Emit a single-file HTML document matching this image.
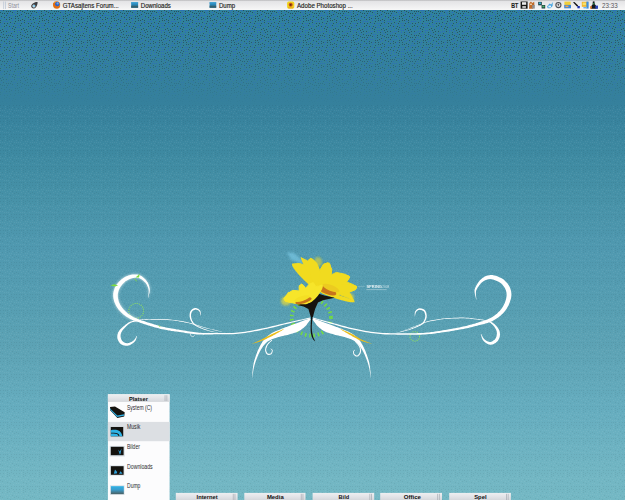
<!DOCTYPE html>
<html><head><meta charset="utf-8">
<style>
html,body{margin:0;padding:0;}
body{width:625px;height:500px;overflow:hidden;position:relative;font-family:"Liberation Sans",sans-serif;
background:linear-gradient(to bottom,#2f839e 0%,#30829e 4%,#33819d 12%,#35809c 20%,#3d89a1 30%,#4792a8 40%,#5099b0 50%,#569eb2 61%,#5da3b5 70%,#66adbf 82%,#72b6c3 95%,#74b8c4 100%);}
#art{position:absolute;left:0;top:0;}
</style></head><body>
<svg id="art" width="625" height="500" viewBox="0 0 625 500" font-family="Liberation Sans, sans-serif">
<defs>
<linearGradient id="tb" x1="0" y1="0" x2="0" y2="1"><stop offset="0" stop-color="#c4c4c6"/><stop offset="0.1" stop-color="#c9c9cb"/><stop offset="0.14" stop-color="#e4e4e6"/><stop offset="0.6" stop-color="#eeeeef"/><stop offset="1" stop-color="#f7f7f7"/></linearGradient>
<linearGradient id="hd" x1="0" y1="0" x2="0" y2="1"><stop offset="0" stop-color="#eeeff1"/><stop offset="0.5" stop-color="#e3e4e8"/><stop offset="1" stop-color="#d6d8dc"/></linearGradient>
<linearGradient id="dump" x1="0" y1="0" x2="0" y2="1"><stop offset="0" stop-color="#2fb2e6"/><stop offset="0.45" stop-color="#3a9ccc"/><stop offset="1" stop-color="#4a5f62"/></linearGradient>
<pattern id="dots" width="24" height="24" patternUnits="userSpaceOnUse"><rect x="2" y="5" width="1" height="1" fill="#28505f"/><rect x="20" y="1" width="1" height="1" fill="#28505f"/><rect x="6" y="19" width="1" height="1" fill="#28505f"/><rect x="21" y="14" width="1" height="1" fill="#28505f"/><rect x="7" y="23" width="1" height="1" fill="#28505f"/><rect x="15" y="3" width="1" height="1" fill="#28505f"/><rect x="2" y="13" width="1" height="1" fill="#28505f"/><rect x="9" y="2" width="1" height="1" fill="#28505f"/><rect x="9" y="17" width="1" height="1" fill="#28505f"/><rect x="6" y="15" width="1" height="1" fill="#28505f"/><rect x="0" y="22" width="1" height="1" fill="#28505f"/><rect x="9" y="19" width="1" height="1" fill="#28505f"/><rect x="15" y="16" width="1" height="1" fill="#28505f"/><rect x="17" y="11" width="1" height="1" fill="#28505f"/><rect x="20" y="8" width="1" height="1" fill="#28505f"/><rect x="6" y="7" width="1" height="1" fill="#28505f"/><rect x="4" y="2" width="1" height="1" fill="#28505f"/><rect x="21" y="5" width="1" height="1" fill="#28505f"/><rect x="6" y="1" width="1" height="1" fill="#28505f"/><rect x="4" y="17" width="1" height="1" fill="#28505f"/><rect x="19" y="15" width="1" height="1" fill="#28505f"/><rect x="18" y="18" width="1" height="1" fill="#28505f"/><rect x="14" y="5" width="1" height="1" fill="#28505f"/><rect x="14" y="23" width="1" height="1" fill="#28505f"/><rect x="21" y="23" width="1" height="1" fill="#28505f"/><rect x="20" y="20" width="1" height="1" fill="#28505f"/><rect x="15" y="18" width="1" height="1" fill="#28505f"/><rect x="1" y="16" width="1" height="1" fill="#28505f"/><rect x="0" y="20" width="1" height="1" fill="#28505f"/><rect x="17" y="16" width="1" height="1" fill="#28505f"/><rect x="12" y="12" width="1" height="1" fill="#28505f"/><rect x="7" y="13" width="1" height="1" fill="#28505f"/><rect x="11" y="18" width="1" height="1" fill="#28505f"/><rect x="4" y="23" width="1" height="1" fill="#28505f"/><rect x="6" y="11" width="1" height="1" fill="#28505f"/><rect x="0" y="12" width="1" height="1" fill="#28505f"/><rect x="10" y="22" width="1" height="1" fill="#28505f"/><rect x="22" y="11" width="1" height="1" fill="#28505f"/><rect x="18" y="20" width="1" height="1" fill="#28505f"/><rect x="20" y="10" width="1" height="1" fill="#28505f"/><rect x="8" y="11" width="1" height="1" fill="#28505f"/><rect x="14" y="7" width="1" height="1" fill="#28505f"/><rect x="13" y="2" width="1" height="1" fill="#28505f"/><rect x="10" y="11" width="1" height="1" fill="#28505f"/><rect x="17" y="13" width="1" height="1" fill="#28505f"/><rect x="0" y="6" width="1" height="1" fill="#28505f"/><rect x="22" y="19" width="1" height="1" fill="#28505f"/><rect x="15" y="21" width="1" height="1" fill="#28505f"/><rect x="1" y="8" width="1" height="1" fill="#28505f"/><rect x="3" y="10" width="1" height="1" fill="#28505f"/><rect x="12" y="4" width="1" height="1" fill="#28505f"/><rect x="23" y="4" width="1" height="1" fill="#28505f"/><rect x="11" y="9" width="1" height="1" fill="#28505f"/><rect x="3" y="7" width="1" height="1" fill="#28505f"/><rect x="4" y="13" width="1" height="1" fill="#28505f"/><rect x="23" y="14" width="1" height="1" fill="#2d64c8"/><rect x="19" y="23" width="1" height="1" fill="#2d64c8"/><rect x="7" y="21" width="1" height="1" fill="#2d64c8"/><rect x="10" y="4" width="1" height="1" fill="#2d64c8"/><rect x="12" y="15" width="1" height="1" fill="#2d64c8"/><rect x="1" y="10" width="1" height="1" fill="#2d64c8"/><rect x="22" y="2" width="1" height="1" fill="#2d64c8"/><rect x="12" y="20" width="1" height="1" fill="#2d64c8"/><rect x="5" y="4" width="1" height="1" fill="#2d64c8"/><rect x="9" y="0" width="1" height="1" fill="#2d64c8"/><rect x="8" y="8" width="1" height="1" fill="#2d64c8"/><rect x="20" y="17" width="1" height="1" fill="#2d64c8"/><rect x="6" y="9" width="1" height="1" fill="#2d64c8"/><rect x="4" y="15" width="1" height="1" fill="#2d64c8"/><rect x="8" y="15" width="1" height="1" fill="#2d64c8"/><rect x="1" y="2" width="1" height="1" fill="#2d64c8"/><rect x="13" y="18" width="1" height="1" fill="#2d64c8"/><rect x="14" y="12" width="1" height="1" fill="#2d64c8"/><rect x="11" y="2" width="1" height="1" fill="#2d64c8"/><rect x="23" y="9" width="1" height="1" fill="#2d64c8"/><rect x="15" y="1" width="1" height="1" fill="#2d64c8"/><rect x="2" y="23" width="1" height="1" fill="#2d64c8"/><rect x="7" y="5" width="1" height="1" fill="#2d64c8"/><rect x="5" y="21" width="1" height="1" fill="#2d64c8"/><rect x="4" y="19" width="1" height="1" fill="#2d64c8"/><rect x="18" y="1" width="1" height="1" fill="#2d64c8"/><rect x="7" y="17" width="1" height="1" fill="#2d64c8"/><rect x="15" y="14" width="1" height="1" fill="#2d64c8"/><rect x="17" y="3" width="1" height="1" fill="#2d64c8"/><rect x="12" y="7" width="1" height="1" fill="#2d64c8"/><rect x="9" y="13" width="1" height="1" fill="#2d64c8"/><rect x="17" y="6" width="1" height="1" fill="#2d64c8"/><rect x="19" y="3" width="1" height="1" fill="#2d64c8"/><rect x="22" y="21" width="1" height="1" fill="#2d64c8"/><rect x="0" y="0" width="1" height="1" fill="#2d64c8"/><rect x="22" y="7" width="1" height="1" fill="#2d64c8"/><rect x="17" y="23" width="1" height="1" fill="#2d64c8"/><rect x="22" y="16" width="1" height="1" fill="#2d64c8"/><rect x="10" y="15" width="1" height="1" fill="#2d64c8"/><rect x="15" y="10" width="1" height="1" fill="#2d64c8"/><rect x="17" y="8" width="1" height="1" fill="#2d64c8"/><rect x="19" y="6" width="1" height="1" fill="#2d64c8"/><rect x="3" y="21" width="1" height="1" fill="#2d64c8"/><rect x="20" y="12" width="1" height="1" fill="#2d64c8"/><rect x="7" y="3" width="1" height="1" fill="#2d64c8"/><rect x="12" y="23" width="1" height="1" fill="#2d64c8"/><rect x="1" y="18" width="1" height="1" fill="#2d64c8"/><rect x="10" y="7" width="1" height="1" fill="#2d64c8"/><rect x="13" y="10" width="1" height="1" fill="#2d64c8"/></pattern>
<pattern id="tex" width="16" height="16" patternUnits="userSpaceOnUse"><rect x="12" y="11" width="1" height="1" fill="#fff" opacity="0.06"/><rect x="5" y="0" width="1" height="1" fill="#fff" opacity="0.06"/><rect x="9" y="13" width="1" height="1" fill="#fff" opacity="0.06"/><rect x="9" y="6" width="1" height="1" fill="#fff" opacity="0.06"/><rect x="0" y="12" width="1" height="1" fill="#fff" opacity="0.06"/><rect x="4" y="4" width="1" height="1" fill="#fff" opacity="0.06"/><rect x="6" y="4" width="1" height="1" fill="#fff" opacity="0.06"/><rect x="2" y="3" width="1" height="1" fill="#fff" opacity="0.06"/><rect x="13" y="4" width="1" height="1" fill="#fff" opacity="0.06"/><rect x="5" y="8" width="1" height="1" fill="#fff" opacity="0.06"/><rect x="5" y="10" width="1" height="1" fill="#fff" opacity="0.06"/><rect x="7" y="15" width="1" height="1" fill="#fff" opacity="0.06"/><rect x="5" y="12" width="1" height="1" fill="#fff" opacity="0.06"/><rect x="0" y="14" width="1" height="1" fill="#fff" opacity="0.06"/><rect x="12" y="1" width="1" height="1" fill="#fff" opacity="0.06"/><rect x="8" y="4" width="1" height="1" fill="#fff" opacity="0.06"/><rect x="0" y="3" width="1" height="1" fill="#fff" opacity="0.06"/><rect x="10" y="15" width="1" height="1" fill="#fff" opacity="0.06"/><rect x="2" y="14" width="1" height="1" fill="#fff" opacity="0.06"/><rect x="9" y="1" width="1" height="1" fill="#fff" opacity="0.06"/><rect x="14" y="14" width="1" height="1" fill="#fff" opacity="0.06"/><rect x="4" y="14" width="1" height="1" fill="#fff" opacity="0.06"/><rect x="11" y="13" width="1" height="1" fill="#fff" opacity="0.06"/><rect x="12" y="15" width="1" height="1" fill="#000" opacity="0.06"/><rect x="13" y="9" width="1" height="1" fill="#000" opacity="0.06"/><rect x="2" y="12" width="1" height="1" fill="#000" opacity="0.06"/><rect x="7" y="12" width="1" height="1" fill="#000" opacity="0.06"/><rect x="3" y="9" width="1" height="1" fill="#000" opacity="0.06"/><rect x="7" y="2" width="1" height="1" fill="#000" opacity="0.06"/><rect x="0" y="6" width="1" height="1" fill="#000" opacity="0.06"/><rect x="11" y="8" width="1" height="1" fill="#000" opacity="0.06"/><rect x="7" y="10" width="1" height="1" fill="#000" opacity="0.06"/><rect x="14" y="1" width="1" height="1" fill="#000" opacity="0.06"/><rect x="0" y="0" width="1" height="1" fill="#000" opacity="0.06"/><rect x="2" y="1" width="1" height="1" fill="#000" opacity="0.06"/><rect x="11" y="6" width="1" height="1" fill="#000" opacity="0.06"/><rect x="7" y="8" width="1" height="1" fill="#000" opacity="0.06"/><rect x="5" y="6" width="1" height="1" fill="#000" opacity="0.06"/><rect x="14" y="11" width="1" height="1" fill="#000" opacity="0.06"/><rect x="9" y="11" width="1" height="1" fill="#000" opacity="0.06"/><rect x="3" y="6" width="1" height="1" fill="#000" opacity="0.06"/><rect x="0" y="9" width="1" height="1" fill="#000" opacity="0.06"/><rect x="7" y="6" width="1" height="1" fill="#000" opacity="0.06"/><rect x="14" y="6" width="1" height="1" fill="#000" opacity="0.06"/><rect x="9" y="9" width="1" height="1" fill="#000" opacity="0.06"/><rect x="10" y="3" width="1" height="1" fill="#000" opacity="0.06"/></pattern>
<linearGradient id="fadeg" x1="0" y1="0" x2="0" y2="1"><stop offset="0" stop-color="#fff"/><stop offset="0.45" stop-color="#bbb"/><stop offset="1" stop-color="#000"/></linearGradient>
<mask id="fade" maskUnits="userSpaceOnUse" x="0" y="10" width="625" height="95"><rect x="0" y="10" width="625" height="95" fill="url(#fadeg)"/></mask>
<filter id="soft" x="-50%" y="-50%" width="200%" height="200%"><feGaussianBlur stdDeviation="1.2"/></filter>
<filter id="glow" x="-30%" y="-30%" width="160%" height="160%"><feGaussianBlur stdDeviation="1.8"/></filter>
</defs>
<!-- dither -->
<rect x="0" y="10" width="625" height="95" fill="url(#dots)" mask="url(#fade)"/>
<rect x="0" y="105" width="625" height="395" fill="url(#tex)"/>
<!-- art -->
<ellipse cx="311.3" cy="317.5" rx="19.6" ry="18.1" fill="none" stroke="#74de3c" stroke-width="3.8" stroke-dasharray="1.4 2.9"/>
<circle cx="136.2" cy="310.8" r="7.4" fill="none" stroke="#8ee060" stroke-width="1.1" stroke-dasharray="1 1.2"/>
<circle cx="414.8" cy="336.4" r="4.8" fill="none" stroke="#8ee060" stroke-width="1.1" stroke-dasharray="1 1.2"/>
<g id="swirls">
<g filter="url(#glow)" opacity="0.7"><path d="M148.1 298.0 L148.3 297.2 L148.5 296.4 L148.7 295.6 L149.0 294.8 L149.2 294.0 L149.4 293.2 L149.6 292.4 L149.7 291.6 L149.8 290.8 L149.8 289.9 L149.8 289.1 L149.7 288.3 L149.5 287.5 L149.3 286.6 L149.1 285.8 L148.8 285.0 L148.5 284.2 L148.2 283.4 L147.8 282.6 L147.3 281.9 L146.8 281.2 L146.3 280.5 L145.7 279.7 L145.0 279.1 L144.4 278.4 L143.6 277.7 L142.9 277.2 L142.1 276.6 L141.4 276.1 L140.6 275.7 L139.8 275.3 L139.0 275.0 L138.2 274.8 L137.4 274.6 L136.5 274.5 L135.7 274.4 L134.8 274.4 L133.9 274.4 L133.1 274.5 L132.2 274.6 L131.3 274.7 L130.3 274.9 L129.4 275.2 L128.4 275.5 L127.4 275.9 L126.5 276.3 L125.5 276.7 L124.6 277.2 L123.7 277.8 L122.8 278.4 L121.9 279.0 L121.1 279.7 L120.3 280.4 L119.5 281.2 L118.7 282.0 L118.0 282.9 L117.3 283.7 L116.6 284.6 L116.0 285.5 L115.5 286.4 L115.0 287.3 L114.6 288.3 L114.3 289.2 L114.0 290.2 L113.7 291.1 L113.5 292.1 L113.3 293.1 L113.2 294.1 L113.2 295.1 L113.2 296.1 L113.3 297.1 L113.4 298.1 L113.6 299.1 L113.9 300.1 L114.1 301.2 L114.5 302.2 L114.9 303.1 L115.3 304.1 L115.7 305.0 L116.2 305.9 L116.7 306.8 L117.3 307.7 L117.9 308.6 L118.5 309.4 L119.2 310.2 L119.9 311.0 L120.6 311.8 L121.3 312.5 L122.0 313.2 L122.7 313.8 L123.4 314.5 L124.2 315.1 L124.9 315.6 L125.7 316.2 L126.5 316.7 L127.2 317.2 L128.0 317.6 L128.7 318.0 L129.5 318.5 L130.2 318.9 L131.0 319.2 L131.8 319.6 L132.5 319.9 L133.2 320.2 L134.0 320.5 L134.7 320.7 L135.4 321.0 L136.1 321.2 L136.8 321.5 L137.5 321.7 L138.5 319.3 L137.8 318.9 L137.1 318.6 L136.4 318.3 L135.7 318.1 L135.0 317.8 L134.4 317.5 L133.7 317.2 L133.0 316.9 L132.4 316.5 L131.8 316.1 L131.1 315.7 L130.4 315.3 L129.7 314.8 L129.1 314.4 L128.4 313.9 L127.8 313.4 L127.1 312.9 L126.5 312.3 L125.9 311.8 L125.3 311.2 L124.7 310.5 L124.0 309.9 L123.4 309.2 L122.8 308.5 L122.2 307.8 L121.7 307.0 L121.1 306.3 L120.6 305.5 L120.2 304.8 L119.8 304.1 L119.5 303.3 L119.1 302.5 L118.8 301.7 L118.6 300.8 L118.4 300.0 L118.2 299.1 L118.0 298.3 L117.9 297.5 L117.8 296.7 L117.8 295.9 L117.8 295.2 L117.8 294.4 L117.9 293.7 L118.0 292.9 L118.2 292.2 L118.4 291.4 L118.6 290.7 L118.9 290.0 L119.2 289.3 L119.5 288.6 L119.9 287.9 L120.3 287.1 L120.8 286.4 L121.4 285.6 L122.0 284.9 L122.6 284.1 L123.3 283.5 L123.9 282.8 L124.6 282.2 L125.2 281.6 L125.9 281.1 L126.6 280.7 L127.4 280.2 L128.1 279.8 L128.9 279.4 L129.7 279.0 L130.5 278.7 L131.3 278.5 L132.1 278.2 L132.8 278.0 L133.5 277.9 L134.2 277.8 L134.9 277.7 L135.6 277.7 L136.2 277.7 L136.9 277.7 L137.5 277.8 L138.2 277.9 L138.8 278.1 L139.4 278.3 L140.0 278.6 L140.7 278.9 L141.4 279.3 L142.1 279.8 L142.7 280.3 L143.4 280.8 L144.0 281.4 L144.6 281.9 L145.2 282.5 L145.7 283.1 L146.1 283.7 L146.5 284.3 L146.9 285.0 L147.2 285.7 L147.6 286.4 L147.8 287.1 L148.1 287.8 L148.3 288.6 L148.5 289.3 L148.6 290.1 L148.7 290.8 L148.7 291.5 L148.7 292.3 L148.6 293.1 L148.5 293.9 L148.4 294.7 L148.2 295.5 L148.1 296.3 L148.0 297.2 L147.9 298.0Z" fill="#fff" /></g>
<path d="M148.1 298.0 L148.3 297.2 L148.5 296.4 L148.7 295.6 L149.0 294.8 L149.2 294.0 L149.4 293.2 L149.6 292.4 L149.7 291.6 L149.8 290.8 L149.8 289.9 L149.8 289.1 L149.7 288.3 L149.5 287.5 L149.3 286.6 L149.1 285.8 L148.8 285.0 L148.5 284.2 L148.2 283.4 L147.8 282.6 L147.3 281.9 L146.8 281.2 L146.3 280.5 L145.7 279.7 L145.0 279.1 L144.4 278.4 L143.6 277.7 L142.9 277.2 L142.1 276.6 L141.4 276.1 L140.6 275.7 L139.8 275.3 L139.0 275.0 L138.2 274.8 L137.4 274.6 L136.5 274.5 L135.7 274.4 L134.8 274.4 L133.9 274.4 L133.1 274.5 L132.2 274.6 L131.3 274.7 L130.3 274.9 L129.4 275.2 L128.4 275.5 L127.4 275.9 L126.5 276.3 L125.5 276.7 L124.6 277.2 L123.7 277.8 L122.8 278.4 L121.9 279.0 L121.1 279.7 L120.3 280.4 L119.5 281.2 L118.7 282.0 L118.0 282.9 L117.3 283.7 L116.6 284.6 L116.0 285.5 L115.5 286.4 L115.0 287.3 L114.6 288.3 L114.3 289.2 L114.0 290.2 L113.7 291.1 L113.5 292.1 L113.3 293.1 L113.2 294.1 L113.2 295.1 L113.2 296.1 L113.3 297.1 L113.4 298.1 L113.6 299.1 L113.9 300.1 L114.1 301.2 L114.5 302.2 L114.9 303.1 L115.3 304.1 L115.7 305.0 L116.2 305.9 L116.7 306.8 L117.3 307.7 L117.9 308.6 L118.5 309.4 L119.2 310.2 L119.9 311.0 L120.6 311.8 L121.3 312.5 L122.0 313.2 L122.7 313.8 L123.4 314.5 L124.2 315.1 L124.9 315.6 L125.7 316.2 L126.5 316.7 L127.2 317.2 L128.0 317.6 L128.7 318.0 L129.5 318.5 L130.2 318.9 L130.9 319.2 L131.6 319.6 L132.3 319.9 L133.0 320.1 L133.6 320.4 L134.3 320.6 L135.0 320.9 L135.8 321.2 L136.6 321.4 L137.5 321.8 L138.5 322.1 L139.6 322.5 L140.7 322.9 L141.9 323.3 L143.1 323.8 L144.4 324.2 L145.7 324.6 L147.0 325.0 L148.3 325.4 L149.6 325.8 L150.9 326.2 L152.2 326.6 L153.6 327.0 L155.0 327.4 L156.4 327.8 L157.8 328.1 L159.3 328.5 L160.7 328.9 L162.2 329.2 L163.7 329.5 L165.3 329.8 L166.8 330.1 L168.3 330.4 L169.9 330.6 L171.5 330.9 L173.1 331.1 L174.7 331.4 L176.4 331.6 L178.1 331.8 L179.8 332.1 L181.6 332.3 L183.5 332.6 L185.4 332.9 L187.4 333.2 L189.4 333.5 L191.4 333.7 L193.4 334.0 L195.3 334.2 L197.2 334.4 L198.9 334.5 L200.6 334.6 L202.1 334.6 L203.5 334.7 L204.9 334.6 L206.2 334.6 L207.6 334.6 L209.0 334.5 L210.5 334.4 L212.2 334.4 L214.0 334.3 L216.0 334.3 L218.2 334.3 L220.5 334.3 L222.9 334.3 L225.4 334.3 L228.0 334.3 L230.5 334.3 L233.1 334.2 L235.6 334.0 L238.1 333.8 L240.5 333.6 L242.8 333.3 L245.2 333.0 L247.6 332.6 L249.9 332.2 L252.3 331.8 L254.7 331.3 L257.1 330.9 L259.6 330.4 L262.1 329.8 L264.7 329.3 L267.4 328.7 L270.2 328.0 L273.0 327.4 L275.8 326.7 L278.6 326.0 L281.4 325.3 L284.1 324.6 L286.7 324.0 L289.1 323.4 L291.5 322.8 L293.7 322.3 L295.9 321.8 L297.9 321.3 L300.0 320.8 L302.0 320.3 L304.0 319.8 L306.0 319.4 L308.0 318.9 L310.1 318.4 L309.9 317.6 L307.8 318.1 L305.8 318.5 L303.8 318.9 L301.8 319.4 L299.8 319.8 L297.7 320.2 L295.6 320.7 L293.5 321.2 L291.2 321.7 L288.9 322.2 L286.4 322.8 L283.8 323.4 L281.1 324.1 L278.3 324.7 L275.5 325.4 L272.7 326.1 L269.9 326.8 L267.2 327.4 L264.5 328.0 L261.9 328.6 L259.3 329.1 L256.9 329.6 L254.5 330.1 L252.1 330.5 L249.7 330.9 L247.4 331.3 L245.0 331.7 L242.7 332.0 L240.3 332.3 L237.9 332.6 L235.5 332.7 L233.0 332.9 L230.5 332.9 L228.0 333.0 L225.4 333.0 L223.0 332.9 L220.5 332.9 L218.2 332.9 L216.0 332.9 L214.0 332.9 L212.1 332.9 L210.5 332.9 L208.9 332.9 L207.5 332.9 L206.2 333.0 L204.9 333.0 L203.5 333.0 L202.1 332.9 L200.7 332.8 L199.1 332.7 L197.3 332.5 L195.5 332.3 L193.6 332.1 L191.7 331.8 L189.7 331.5 L187.7 331.2 L185.8 330.8 L183.8 330.5 L182.0 330.2 L180.2 329.9 L178.4 329.6 L176.7 329.4 L175.1 329.1 L173.5 328.8 L171.9 328.6 L170.3 328.3 L168.8 328.0 L167.3 327.7 L165.8 327.4 L164.3 327.1 L162.8 326.7 L161.3 326.4 L159.9 326.0 L158.5 325.6 L157.1 325.2 L155.7 324.8 L154.4 324.4 L153.0 324.0 L151.7 323.6 L150.4 323.2 L149.1 322.8 L147.8 322.4 L146.5 322.0 L145.2 321.6 L144.0 321.1 L142.8 320.7 L141.6 320.4 L140.5 320.0 L139.4 319.6 L138.5 319.2 L137.6 318.9 L136.8 318.6 L136.0 318.3 L135.4 318.0 L134.7 317.7 L134.1 317.5 L133.6 317.2 L133.0 316.9 L132.4 316.5 L131.8 316.1 L131.1 315.7 L130.4 315.3 L129.7 314.8 L129.1 314.4 L128.4 313.9 L127.8 313.4 L127.1 312.9 L126.5 312.3 L125.9 311.8 L125.3 311.2 L124.7 310.5 L124.0 309.9 L123.4 309.2 L122.8 308.5 L122.2 307.8 L121.7 307.0 L121.1 306.3 L120.6 305.5 L120.2 304.8 L119.8 304.1 L119.5 303.3 L119.1 302.5 L118.8 301.7 L118.6 300.8 L118.4 300.0 L118.2 299.1 L118.0 298.3 L117.9 297.5 L117.8 296.7 L117.8 295.9 L117.8 295.2 L117.8 294.4 L117.9 293.7 L118.0 292.9 L118.2 292.2 L118.4 291.4 L118.6 290.7 L118.9 290.0 L119.2 289.3 L119.5 288.6 L119.9 287.9 L120.3 287.1 L120.8 286.4 L121.4 285.6 L122.0 284.9 L122.6 284.1 L123.3 283.5 L123.9 282.8 L124.6 282.2 L125.2 281.6 L125.9 281.1 L126.6 280.7 L127.4 280.2 L128.1 279.8 L128.9 279.4 L129.7 279.0 L130.5 278.7 L131.3 278.5 L132.1 278.2 L132.8 278.0 L133.5 277.9 L134.2 277.8 L134.9 277.7 L135.6 277.7 L136.2 277.7 L136.9 277.7 L137.5 277.8 L138.2 277.9 L138.8 278.1 L139.4 278.3 L140.0 278.6 L140.7 278.9 L141.4 279.3 L142.1 279.8 L142.7 280.3 L143.4 280.8 L144.0 281.4 L144.6 281.9 L145.2 282.5 L145.7 283.1 L146.1 283.7 L146.5 284.3 L146.9 285.0 L147.2 285.7 L147.6 286.4 L147.8 287.1 L148.1 287.8 L148.3 288.6 L148.5 289.3 L148.6 290.1 L148.7 290.8 L148.7 291.5 L148.7 292.3 L148.6 293.1 L148.5 293.9 L148.4 294.7 L148.2 295.5 L148.1 296.3 L148.0 297.2 L147.9 298.0Z" fill="#fff" />
<path d="M136.9 320.0 L136.2 320.2 L135.5 320.3 L134.7 320.5 L134.0 320.6 L133.3 320.8 L132.5 321.0 L131.8 321.2 L131.1 321.4 L130.4 321.6 L129.7 321.9 L129.1 322.3 L128.4 322.6 L127.8 323.0 L127.2 323.4 L126.6 323.9 L126.0 324.3 L125.5 324.8 L124.9 325.2 L124.4 325.7 L123.9 326.1 L123.3 326.6 L122.8 327.1 L122.2 327.6 L121.7 328.0 L121.1 328.6 L120.6 329.1 L120.1 329.6 L119.6 330.2 L119.1 330.8 L118.8 331.4 L118.4 332.0 L118.1 332.6 L117.9 333.2 L117.7 333.8 L117.5 334.5 L117.4 335.1 L117.3 335.8 L117.3 336.4 L117.3 337.1 L117.3 337.7 L117.4 338.4 L117.6 339.1 L117.8 339.7 L118.1 340.3 L118.4 341.0 L118.7 341.6 L119.1 342.1 L119.5 342.7 L119.9 343.2 L120.4 343.7 L120.9 344.1 L121.5 344.5 L122.1 344.8 L122.7 345.0 L123.3 345.3 L123.9 345.5 L124.6 345.6 L125.2 345.7 L125.8 345.8 L126.4 345.8 L127.1 345.8 L127.7 345.7 L128.3 345.5 L128.9 345.4 L129.5 345.2 L130.0 344.9 L130.5 344.7 L131.0 344.4 L131.5 344.1 L132.0 343.9 L132.4 343.6 L132.8 343.3 L133.3 343.0 L133.6 342.7 L134.0 342.3 L134.4 342.0 L134.7 341.6 L135.0 341.2 L135.3 340.8 L135.6 340.4 L135.8 340.0 L136.0 339.6 L136.2 339.1 L136.3 338.7 L136.4 338.2 L136.5 337.8 L136.6 337.4 L136.8 336.9 L136.9 336.5 L137.0 336.1 L136.6 335.9 L136.4 336.3 L136.2 336.7 L136.0 337.1 L135.8 337.5 L135.6 337.9 L135.4 338.3 L135.2 338.6 L134.9 339.0 L134.7 339.3 L134.4 339.6 L134.2 339.9 L133.9 340.2 L133.5 340.5 L133.2 340.7 L132.9 341.0 L132.5 341.3 L132.2 341.5 L131.8 341.7 L131.4 341.9 L131.0 342.1 L130.6 342.3 L130.1 342.5 L129.7 342.7 L129.2 342.8 L128.7 343.0 L128.3 343.1 L127.8 343.2 L127.4 343.2 L126.9 343.2 L126.6 343.2 L126.2 343.1 L125.7 343.0 L125.3 342.9 L124.8 342.7 L124.4 342.5 L123.9 342.3 L123.5 342.1 L123.2 341.8 L122.9 341.6 L122.6 341.3 L122.3 341.0 L122.1 340.7 L121.8 340.3 L121.6 339.9 L121.4 339.5 L121.2 339.0 L121.0 338.6 L120.9 338.1 L120.8 337.7 L120.7 337.3 L120.6 336.8 L120.6 336.4 L120.6 336.0 L120.6 335.5 L120.6 335.0 L120.7 334.6 L120.8 334.1 L120.9 333.6 L121.1 333.1 L121.2 332.6 L121.5 332.2 L121.7 331.7 L122.1 331.2 L122.4 330.6 L122.8 330.1 L123.2 329.6 L123.7 329.0 L124.2 328.5 L124.6 328.0 L125.1 327.5 L125.6 327.0 L126.1 326.5 L126.6 326.0 L127.1 325.5 L127.6 325.0 L128.1 324.6 L128.6 324.2 L129.2 323.8 L129.7 323.4 L130.3 323.1 L130.9 322.8 L131.5 322.5 L132.2 322.3 L132.8 322.1 L133.5 321.9 L134.3 321.7 L135.0 321.6 L135.7 321.4 L136.4 321.2 L137.1 321.0Z" fill="#fff" />
<path d="M200.5 315.6 L200.6 315.2 L200.6 314.7 L200.6 314.3 L200.6 313.9 L200.7 313.4 L200.7 313.0 L200.7 312.5 L200.6 312.1 L200.6 311.7 L200.5 311.3 L200.3 310.9 L200.1 310.6 L199.8 310.3 L199.6 310.0 L199.3 309.7 L199.0 309.4 L198.7 309.2 L198.4 309.0 L198.1 308.8 L197.8 308.7 L197.5 308.5 L197.2 308.4 L196.8 308.3 L196.5 308.2 L196.1 308.1 L195.8 308.1 L195.4 308.1 L195.0 308.1 L194.7 308.1 L194.3 308.2 L193.9 308.3 L193.6 308.5 L193.2 308.6 L192.8 308.8 L192.5 309.0 L192.1 309.3 L191.8 309.6 L191.4 309.9 L191.1 310.2 L190.8 310.5 L190.6 310.9 L190.4 311.3 L190.2 311.7 L190.0 312.1 L189.9 312.6 L189.8 313.0 L189.7 313.5 L189.6 314.0 L189.6 314.5 L189.6 315.0 L189.6 315.5 L189.6 316.0 L189.6 316.5 L189.7 317.1 L189.8 317.6 L190.0 318.1 L190.1 318.7 L190.3 319.2 L190.5 319.8 L190.7 320.3 L190.9 320.8 L191.2 321.3 L191.5 321.7 L191.8 322.2 L192.1 322.7 L192.5 323.2 L192.9 323.6 L193.3 324.1 L193.7 324.5 L194.1 324.9 L194.6 325.3 L195.1 325.6 L195.6 326.0 L196.2 326.3 L196.7 326.5 L197.3 326.8 L197.9 327.1 L198.5 327.4 L199.2 327.6 L199.8 327.9 L200.5 328.2 L201.2 328.5 L202.0 328.8 L202.8 329.1 L203.6 329.4 L204.4 329.7 L205.3 330.0 L206.1 330.3 L207.0 330.5 L207.9 330.8 L208.8 331.0 L209.8 331.3 L210.8 331.5 L211.8 331.7 L212.8 331.9 L213.9 332.1 L214.9 332.3 L215.9 332.5 L217.0 332.7 L218.0 332.9 L218.0 332.7 L217.0 332.5 L216.0 332.2 L215.0 332.0 L213.9 331.7 L212.9 331.5 L211.9 331.3 L210.9 331.0 L209.9 330.7 L209.0 330.5 L208.1 330.2 L207.2 329.9 L206.3 329.6 L205.5 329.3 L204.7 329.0 L203.9 328.7 L203.1 328.4 L202.3 328.0 L201.6 327.7 L200.9 327.4 L200.2 327.1 L199.5 326.8 L198.9 326.5 L198.3 326.2 L197.7 325.9 L197.2 325.6 L196.7 325.4 L196.2 325.1 L195.7 324.8 L195.3 324.4 L194.9 324.1 L194.5 323.7 L194.1 323.3 L193.7 322.9 L193.4 322.5 L193.1 322.0 L192.8 321.6 L192.6 321.1 L192.3 320.7 L192.1 320.2 L191.9 319.7 L191.7 319.3 L191.6 318.8 L191.4 318.3 L191.3 317.8 L191.2 317.3 L191.1 316.8 L191.1 316.4 L191.1 315.9 L191.0 315.4 L191.0 315.0 L191.1 314.6 L191.1 314.2 L191.2 313.8 L191.3 313.4 L191.4 313.0 L191.5 312.7 L191.7 312.3 L191.8 312.0 L192.0 311.7 L192.2 311.5 L192.3 311.2 L192.5 311.0 L192.8 310.8 L193.0 310.6 L193.3 310.4 L193.6 310.2 L193.9 310.1 L194.2 310.0 L194.5 309.9 L194.7 309.8 L195.0 309.7 L195.2 309.7 L195.4 309.6 L195.7 309.6 L195.9 309.6 L196.2 309.7 L196.5 309.7 L196.7 309.8 L197.0 309.8 L197.2 309.9 L197.5 310.0 L197.7 310.2 L198.0 310.3 L198.3 310.5 L198.5 310.6 L198.8 310.8 L199.0 311.0 L199.2 311.2 L199.4 311.5 L199.5 311.7 L199.7 312.0 L199.8 312.3 L199.9 312.6 L199.9 313.0 L200.0 313.4 L200.0 313.9 L200.1 314.3 L200.1 314.8 L200.2 315.2 L200.3 315.6Z" fill="#fff" />
<path d="M476.4 299.4 L476.4 298.7 L476.3 298.0 L476.2 297.4 L476.1 296.7 L476.1 296.0 L476.0 295.4 L475.9 294.7 L475.9 294.1 L475.9 293.5 L475.9 293.0 L475.9 292.5 L476.0 292.0 L476.0 291.6 L476.0 291.2 L476.1 290.9 L476.2 290.5 L476.3 290.2 L476.5 289.8 L476.7 289.4 L476.9 288.9 L477.2 288.4 L477.6 287.8 L478.0 287.1 L478.5 286.5 L479.0 285.8 L479.5 285.1 L480.0 284.4 L480.5 283.8 L481.0 283.3 L481.5 282.8 L482.0 282.3 L482.5 281.9 L483.0 281.5 L483.5 281.2 L484.1 280.9 L484.6 280.6 L485.1 280.3 L485.6 280.1 L486.1 279.9 L486.7 279.7 L487.2 279.5 L487.7 279.4 L488.2 279.3 L488.7 279.2 L489.3 279.2 L489.8 279.1 L490.3 279.1 L490.9 279.2 L491.4 279.2 L491.9 279.3 L492.5 279.4 L493.1 279.5 L493.7 279.7 L494.3 279.9 L495.0 280.2 L495.6 280.4 L496.3 280.7 L496.9 281.0 L497.5 281.3 L498.0 281.5 L498.6 281.8 L499.0 282.0 L499.4 282.3 L499.8 282.5 L500.2 282.7 L500.5 282.9 L500.9 283.2 L501.2 283.5 L501.5 283.8 L501.9 284.1 L502.3 284.5 L502.6 285.0 L503.0 285.4 L503.4 285.9 L503.8 286.4 L504.2 287.0 L504.5 287.5 L504.8 288.0 L505.1 288.5 L505.3 289.0 L505.5 289.5 L505.8 290.1 L505.9 290.6 L506.1 291.1 L506.2 291.7 L506.4 292.2 L506.5 292.8 L506.5 293.4 L506.6 293.9 L506.6 294.5 L506.6 295.1 L506.6 295.7 L506.5 296.4 L506.4 297.0 L506.3 297.7 L506.2 298.4 L506.0 299.1 L505.8 299.8 L505.6 300.5 L505.4 301.2 L505.1 301.9 L504.9 302.6 L504.6 303.4 L504.2 304.1 L503.9 304.8 L503.5 305.5 L503.1 306.2 L502.7 306.9 L502.3 307.6 L501.8 308.2 L501.3 308.9 L500.8 309.6 L500.3 310.2 L499.7 310.9 L499.1 311.5 L498.5 312.1 L497.8 312.8 L497.2 313.4 L496.5 313.9 L495.8 314.5 L495.2 315.0 L494.5 315.5 L493.8 316.0 L493.1 316.5 L492.4 316.9 L491.6 317.4 L490.9 317.8 L490.1 318.2 L489.2 318.6 L488.3 319.0 L487.4 319.4 L486.5 319.8 L485.5 320.2 L484.4 320.5 L483.4 320.9 L482.3 321.2 L481.1 321.6 L480.0 321.9 L478.8 322.3 L477.6 322.7 L476.4 323.0 L475.3 323.4 L474.1 323.7 L472.9 324.1 L471.7 324.4 L470.5 324.8 L469.2 325.1 L467.8 325.5 L466.3 325.9 L464.8 326.2 L463.0 326.6 L461.2 327.0 L459.3 327.4 L457.3 327.8 L455.2 328.2 L453.2 328.6 L451.0 328.9 L448.9 329.3 L446.9 329.7 L444.8 330.0 L442.9 330.3 L440.9 330.7 L439.0 331.0 L437.0 331.3 L435.1 331.6 L433.1 331.9 L431.1 332.1 L429.1 332.4 L427.0 332.6 L424.9 332.8 L422.8 332.9 L420.6 333.0 L418.3 333.1 L416.0 333.2 L413.7 333.2 L411.4 333.3 L409.1 333.3 L406.7 333.3 L404.4 333.3 L402.0 333.3 L399.6 333.3 L397.3 333.3 L394.9 333.3 L392.5 333.2 L390.1 333.2 L387.7 333.1 L385.3 333.1 L382.9 332.9 L380.5 332.8 L378.1 332.6 L375.7 332.3 L373.3 332.0 L370.9 331.7 L368.5 331.3 L366.1 330.9 L363.7 330.5 L361.3 330.0 L358.9 329.6 L356.5 329.1 L354.1 328.6 L351.7 328.0 L349.2 327.4 L346.7 326.8 L344.2 326.1 L341.7 325.4 L339.3 324.8 L336.9 324.1 L334.5 323.4 L332.3 322.8 L330.2 322.2 L328.2 321.7 L326.3 321.2 L324.5 320.7 L322.8 320.3 L321.2 319.8 L319.6 319.4 L318.0 318.9 L316.4 318.5 L314.8 318.1 L313.1 317.6 L312.9 318.4 L314.6 318.9 L316.2 319.4 L317.8 319.8 L319.3 320.3 L320.9 320.8 L322.6 321.3 L324.2 321.8 L326.0 322.3 L327.9 322.8 L329.8 323.4 L332.0 324.0 L334.2 324.6 L336.5 325.3 L338.9 326.0 L341.4 326.7 L343.9 327.4 L346.4 328.0 L348.9 328.7 L351.4 329.3 L353.9 329.8 L356.3 330.3 L358.7 330.8 L361.1 331.3 L363.5 331.8 L365.9 332.2 L368.3 332.6 L370.7 333.0 L373.1 333.3 L375.5 333.6 L377.9 333.8 L380.4 334.1 L382.8 334.2 L385.2 334.4 L387.6 334.5 L390.0 334.5 L392.5 334.6 L394.9 334.6 L397.3 334.7 L399.6 334.7 L402.0 334.7 L404.3 334.7 L406.7 334.8 L409.1 334.8 L411.4 334.8 L413.8 334.8 L416.1 334.8 L418.4 334.7 L420.6 334.7 L422.9 334.6 L425.1 334.4 L427.2 334.3 L429.3 334.1 L431.3 333.9 L433.3 333.7 L435.3 333.4 L437.3 333.1 L439.2 332.9 L441.2 332.6 L443.2 332.3 L445.2 332.0 L447.2 331.7 L449.3 331.4 L451.4 331.0 L453.5 330.7 L455.6 330.3 L457.7 330.0 L459.7 329.6 L461.7 329.3 L463.5 328.9 L465.2 328.6 L466.9 328.2 L468.4 327.9 L469.8 327.6 L471.1 327.3 L472.4 326.9 L473.6 326.6 L474.8 326.3 L476.0 326.0 L477.2 325.7 L478.4 325.3 L479.6 325.0 L480.8 324.7 L481.9 324.4 L483.1 324.2 L484.2 323.9 L485.4 323.6 L486.5 323.2 L487.6 322.9 L488.6 322.6 L489.7 322.2 L490.6 321.8 L491.6 321.4 L492.5 320.9 L493.3 320.5 L494.2 320.1 L495.0 319.6 L495.8 319.1 L496.6 318.6 L497.4 318.1 L498.2 317.5 L498.9 316.9 L499.7 316.3 L500.5 315.7 L501.2 315.0 L501.9 314.3 L502.6 313.7 L503.3 313.0 L504.0 312.2 L504.6 311.5 L505.2 310.8 L505.7 310.0 L506.3 309.2 L506.8 308.4 L507.3 307.6 L507.7 306.8 L508.2 306.0 L508.6 305.2 L508.9 304.4 L509.3 303.6 L509.6 302.8 L509.9 302.0 L510.2 301.1 L510.4 300.3 L510.7 299.5 L510.9 298.7 L511.1 297.8 L511.2 297.0 L511.3 296.2 L511.4 295.3 L511.4 294.5 L511.4 293.7 L511.3 292.9 L511.2 292.1 L511.1 291.3 L510.9 290.6 L510.7 289.8 L510.5 289.1 L510.3 288.4 L510.0 287.7 L509.7 287.0 L509.3 286.3 L508.9 285.6 L508.5 284.9 L508.0 284.3 L507.6 283.6 L507.1 283.0 L506.6 282.4 L506.1 281.9 L505.6 281.4 L505.1 280.9 L504.6 280.4 L504.2 280.0 L503.7 279.6 L503.2 279.2 L502.7 278.9 L502.2 278.6 L501.6 278.3 L501.1 278.0 L500.5 277.7 L500.0 277.5 L499.3 277.2 L498.7 276.9 L498.0 276.6 L497.2 276.3 L496.5 276.1 L495.7 275.8 L494.9 275.6 L494.1 275.4 L493.3 275.2 L492.5 275.1 L491.7 275.1 L490.9 275.1 L490.2 275.1 L489.5 275.2 L488.8 275.3 L488.1 275.4 L487.4 275.6 L486.7 275.8 L486.0 276.0 L485.3 276.3 L484.7 276.6 L484.1 277.0 L483.4 277.4 L482.8 277.8 L482.2 278.2 L481.7 278.7 L481.1 279.2 L480.5 279.7 L480.0 280.3 L479.5 280.8 L479.0 281.5 L478.4 282.2 L477.9 282.9 L477.4 283.7 L476.9 284.4 L476.5 285.2 L476.1 286.0 L475.7 286.7 L475.4 287.4 L475.1 288.1 L474.9 288.7 L474.7 289.2 L474.6 289.7 L474.5 290.2 L474.5 290.7 L474.5 291.1 L474.5 291.6 L474.6 292.0 L474.6 292.5 L474.7 293.0 L474.8 293.6 L474.9 294.2 L475.0 294.8 L475.2 295.5 L475.3 296.1 L475.5 296.8 L475.7 297.5 L475.8 298.1 L476.0 298.8 L476.2 299.4Z" fill="#fff" />
<path d="M487.3 321.1 L487.6 321.3 L488.0 321.5 L488.3 321.7 L488.6 321.9 L489.0 322.0 L489.3 322.2 L489.6 322.4 L489.9 322.6 L490.3 322.8 L490.6 323.1 L491.0 323.4 L491.3 323.7 L491.7 324.0 L492.1 324.3 L492.5 324.7 L492.9 325.1 L493.2 325.4 L493.6 325.8 L493.9 326.2 L494.2 326.6 L494.5 327.1 L494.8 327.5 L495.1 328.0 L495.4 328.5 L495.7 329.0 L496.0 329.5 L496.2 330.0 L496.4 330.5 L496.5 331.0 L496.7 331.4 L496.8 331.9 L496.8 332.3 L496.9 332.7 L496.9 333.1 L496.9 333.6 L496.9 334.0 L496.8 334.4 L496.8 334.8 L496.7 335.3 L496.6 335.7 L496.5 336.1 L496.4 336.5 L496.3 336.9 L496.1 337.3 L496.0 337.7 L495.8 338.1 L495.6 338.4 L495.3 338.8 L495.1 339.1 L494.9 339.4 L494.6 339.7 L494.2 340.0 L493.8 340.3 L493.3 340.6 L492.9 340.9 L492.4 341.2 L492.0 341.5 L491.5 341.7 L491.1 341.8 L490.8 341.9 L490.5 342.0 L490.2 342.0 L489.8 342.0 L489.4 341.9 L489.1 341.8 L488.7 341.7 L488.2 341.6 L487.8 341.4 L487.4 341.2 L487.0 341.0 L486.7 340.9 L486.3 340.7 L486.0 340.5 L485.7 340.3 L485.3 340.0 L485.0 339.8 L484.7 339.5 L484.4 339.2 L484.1 338.9 L483.8 338.6 L483.5 338.2 L483.3 337.9 L483.0 337.4 L482.7 337.0 L482.5 336.5 L482.2 336.0 L482.0 335.6 L481.7 335.1 L481.5 334.6 L481.2 334.1 L480.8 334.3 L481.0 334.8 L481.1 335.3 L481.3 335.8 L481.4 336.4 L481.6 336.9 L481.7 337.4 L481.9 337.9 L482.1 338.5 L482.3 339.0 L482.6 339.4 L482.9 339.9 L483.1 340.3 L483.4 340.7 L483.7 341.1 L484.1 341.4 L484.4 341.8 L484.8 342.1 L485.2 342.4 L485.6 342.7 L486.0 343.0 L486.4 343.2 L486.8 343.5 L487.2 343.7 L487.7 344.0 L488.2 344.2 L488.8 344.4 L489.3 344.6 L489.9 344.7 L490.6 344.7 L491.2 344.7 L491.9 344.6 L492.5 344.4 L493.1 344.2 L493.8 343.9 L494.4 343.6 L495.0 343.2 L495.6 342.9 L496.1 342.5 L496.7 342.1 L497.1 341.6 L497.6 341.2 L498.0 340.7 L498.3 340.1 L498.6 339.6 L498.9 339.1 L499.1 338.5 L499.3 338.0 L499.5 337.4 L499.7 336.9 L499.8 336.3 L499.9 335.8 L499.9 335.2 L500.0 334.6 L500.0 334.1 L499.9 333.5 L499.9 332.9 L499.8 332.3 L499.7 331.7 L499.5 331.1 L499.3 330.6 L499.1 330.0 L498.8 329.4 L498.5 328.9 L498.1 328.3 L497.8 327.8 L497.4 327.2 L497.0 326.7 L496.6 326.3 L496.2 325.8 L495.8 325.4 L495.4 324.9 L494.9 324.5 L494.5 324.1 L494.0 323.8 L493.6 323.4 L493.1 323.1 L492.7 322.8 L492.2 322.5 L491.8 322.2 L491.4 321.9 L491.0 321.7 L490.6 321.5 L490.2 321.3 L489.8 321.1 L489.5 321.0 L489.1 320.8 L488.8 320.7 L488.4 320.5 L488.1 320.4 L487.7 320.3Z" fill="#fff" />
<path d="M414.9 316.4 L415.0 316.0 L415.1 315.5 L415.2 315.0 L415.3 314.6 L415.4 314.1 L415.5 313.7 L415.6 313.3 L415.7 312.9 L415.8 312.5 L416.0 312.2 L416.1 311.9 L416.3 311.7 L416.5 311.4 L416.8 311.2 L417.0 310.9 L417.3 310.7 L417.5 310.5 L417.8 310.4 L418.1 310.2 L418.3 310.1 L418.6 310.0 L418.8 310.0 L419.0 309.9 L419.3 309.9 L419.5 309.8 L419.8 309.8 L420.0 309.8 L420.3 309.9 L420.5 309.9 L420.8 310.0 L421.1 310.1 L421.5 310.2 L421.8 310.3 L422.2 310.4 L422.5 310.5 L422.8 310.7 L423.1 310.9 L423.4 311.1 L423.7 311.3 L423.9 311.5 L424.1 311.8 L424.3 312.1 L424.5 312.5 L424.6 312.9 L424.8 313.3 L424.9 313.8 L425.0 314.2 L425.1 314.7 L425.2 315.1 L425.3 315.5 L425.3 315.9 L425.3 316.4 L425.2 316.8 L425.2 317.2 L425.1 317.6 L425.0 318.0 L424.9 318.5 L424.7 318.9 L424.6 319.3 L424.4 319.7 L424.2 320.1 L424.0 320.5 L423.8 321.0 L423.6 321.4 L423.3 321.7 L423.0 322.1 L422.7 322.5 L422.4 322.9 L422.1 323.2 L421.7 323.6 L421.2 323.9 L420.7 324.2 L420.2 324.5 L419.7 324.8 L419.1 325.1 L418.5 325.4 L417.8 325.7 L417.2 326.0 L416.5 326.3 L415.8 326.6 L415.1 326.9 L414.4 327.2 L413.7 327.5 L413.0 327.8 L412.2 328.1 L411.5 328.5 L410.6 328.8 L409.8 329.1 L408.9 329.4 L407.9 329.7 L406.9 330.0 L405.8 330.3 L404.6 330.7 L403.4 331.0 L402.2 331.3 L400.9 331.6 L399.7 331.9 L398.4 332.3 L397.2 332.6 L396.0 332.9 L396.0 333.1 L397.2 332.8 L398.5 332.5 L399.8 332.3 L401.0 332.0 L402.3 331.7 L403.5 331.4 L404.8 331.1 L405.9 330.9 L407.0 330.6 L408.1 330.3 L409.1 330.0 L410.0 329.7 L410.9 329.4 L411.7 329.1 L412.5 328.9 L413.3 328.6 L414.0 328.3 L414.8 328.0 L415.5 327.7 L416.2 327.4 L416.9 327.1 L417.6 326.9 L418.2 326.6 L418.9 326.3 L419.5 326.0 L420.1 325.7 L420.7 325.4 L421.3 325.1 L421.8 324.8 L422.3 324.4 L422.8 324.1 L423.2 323.7 L423.6 323.3 L424.0 322.9 L424.3 322.4 L424.6 322.0 L424.9 321.6 L425.1 321.1 L425.4 320.7 L425.6 320.3 L425.8 319.8 L426.0 319.4 L426.2 318.9 L426.3 318.4 L426.5 317.9 L426.6 317.5 L426.7 317.0 L426.7 316.5 L426.8 316.0 L426.7 315.5 L426.7 315.0 L426.6 314.4 L426.5 313.9 L426.4 313.4 L426.3 312.8 L426.1 312.3 L425.9 311.8 L425.7 311.4 L425.4 310.9 L425.1 310.5 L424.8 310.1 L424.4 309.8 L424.0 309.5 L423.6 309.3 L423.2 309.1 L422.8 308.9 L422.3 308.7 L421.9 308.6 L421.5 308.5 L421.2 308.4 L420.8 308.4 L420.4 308.3 L420.1 308.3 L419.7 308.3 L419.4 308.3 L419.0 308.4 L418.7 308.5 L418.3 308.6 L418.0 308.7 L417.7 308.9 L417.4 309.1 L417.1 309.3 L416.8 309.5 L416.5 309.8 L416.2 310.0 L415.9 310.4 L415.7 310.7 L415.4 311.0 L415.2 311.4 L415.0 311.8 L414.9 312.2 L414.8 312.7 L414.8 313.1 L414.7 313.6 L414.7 314.0 L414.7 314.5 L414.7 315.0 L414.7 315.5 L414.7 315.9 L414.7 316.4Z" fill="#fff" />
<path d="M140.0 320.0 L141.0 320.0 L141.8 320.0 L142.6 319.9 L143.4 319.8 L144.3 319.8 L145.2 319.7 L146.1 319.7 L147.2 319.7 L148.5 319.6 L150.0 319.6 L151.7 319.7 L153.7 319.7 L155.8 319.7 L158.1 319.7 L160.5 319.8 L162.9 319.8 L165.3 319.9 L167.6 320.0 L169.9 320.2 L172.0 320.3 L173.9 320.6 L175.8 320.8 L177.7 321.1 L179.5 321.4 L181.3 321.7 L183.1 322.0 L184.8 322.4 L186.5 322.8 L188.2 323.1 L189.9 323.5 L191.6 323.9 L193.2 324.4 L194.8 324.8 L196.3 325.3 L197.8 325.8 L199.4 326.3 L201.0 326.8 L202.6 327.3 L204.2 327.8 L205.9 328.2 L207.7 328.7 L209.6 329.1 L211.4 329.6 L213.3 330.0 L215.3 330.4 L217.2 330.9 L219.2 331.3 L221.1 331.7 L223.1 332.1 L225.0 332.6 L225.0 332.4 L223.1 332.0 L221.2 331.5 L219.2 331.0 L217.3 330.6 L215.4 330.1 L213.4 329.6 L211.5 329.2 L209.7 328.7 L207.8 328.2 L206.1 327.8 L204.4 327.3 L202.7 326.8 L201.1 326.3 L199.6 325.7 L198.0 325.2 L196.5 324.7 L194.9 324.2 L193.4 323.7 L191.8 323.3 L190.1 322.9 L188.4 322.5 L186.7 322.1 L184.9 321.7 L183.2 321.3 L181.4 321.0 L179.6 320.7 L177.8 320.4 L175.9 320.1 L174.0 319.9 L172.0 319.7 L169.9 319.5 L167.7 319.3 L165.3 319.2 L162.9 319.1 L160.5 319.1 L158.1 319.0 L155.8 319.0 L153.7 319.0 L151.7 319.0 L150.0 319.0 L148.5 319.0 L147.2 319.0 L146.1 319.0 L145.1 319.1 L144.2 319.2 L143.4 319.2 L142.6 319.3 L141.8 319.4 L140.9 319.5 L140.0 319.6Z" fill="#fff" />
<path d="M487.0 320.4 L485.8 320.2 L484.6 320.0 L483.4 319.8 L482.1 319.6 L480.9 319.5 L479.7 319.3 L478.5 319.1 L477.3 318.9 L476.2 318.8 L475.0 318.7 L474.0 318.5 L473.1 318.4 L472.2 318.3 L471.3 318.1 L470.5 318.0 L469.6 317.9 L468.6 317.8 L467.6 317.7 L466.4 317.7 L465.0 317.7 L463.5 317.6 L461.7 317.6 L459.9 317.6 L457.9 317.7 L455.9 317.7 L453.9 317.8 L451.8 317.9 L449.8 318.0 L447.8 318.1 L446.0 318.3 L444.2 318.4 L442.3 318.6 L440.5 318.9 L438.7 319.1 L436.9 319.4 L435.2 319.7 L433.5 320.0 L431.9 320.3 L430.4 320.6 L428.9 321.0 L427.6 321.3 L426.4 321.6 L425.4 322.0 L424.4 322.3 L423.4 322.7 L422.5 323.1 L421.5 323.5 L420.4 324.0 L419.3 324.4 L417.9 325.0 L416.4 325.5 L414.8 326.2 L413.0 326.8 L411.2 327.5 L409.4 328.3 L407.5 329.0 L405.6 329.7 L403.7 330.5 L401.8 331.2 L400.0 331.9 L400.0 332.1 L401.9 331.4 L403.8 330.7 L405.7 330.0 L407.6 329.3 L409.5 328.6 L411.4 327.9 L413.2 327.2 L414.9 326.6 L416.6 326.0 L418.1 325.4 L419.5 324.9 L420.7 324.5 L421.7 324.0 L422.7 323.7 L423.7 323.3 L424.6 322.9 L425.6 322.6 L426.6 322.3 L427.8 322.0 L429.1 321.6 L430.5 321.3 L432.1 321.0 L433.7 320.7 L435.3 320.4 L437.1 320.1 L438.8 319.8 L440.6 319.6 L442.4 319.3 L444.2 319.1 L446.0 318.9 L447.9 318.8 L449.8 318.7 L451.9 318.6 L453.9 318.5 L455.9 318.4 L458.0 318.4 L459.9 318.3 L461.7 318.3 L463.5 318.3 L465.0 318.3 L466.3 318.4 L467.5 318.4 L468.6 318.5 L469.5 318.6 L470.4 318.7 L471.2 318.8 L472.1 319.0 L473.0 319.1 L473.9 319.2 L475.0 319.3 L476.1 319.5 L477.2 319.6 L478.4 319.8 L479.6 319.9 L480.8 320.1 L482.1 320.2 L483.3 320.4 L484.5 320.5 L485.8 320.7 L487.0 320.8Z" fill="#fff" />
<path d="M271.7 339.7 L271.3 340.1 L270.8 340.6 L270.3 341.0 L269.8 341.4 L269.3 341.9 L268.8 342.3 L268.3 342.7 L267.9 343.2 L267.5 343.7 L267.1 344.2 L266.7 344.8 L266.4 345.3 L266.1 345.9 L265.9 346.5 L265.6 347.1 L265.4 347.7 L265.3 348.3 L265.2 348.9 L265.1 349.5 L265.1 350.0 L265.1 350.5 L265.2 351.1 L265.3 351.6 L265.5 352.1 L265.7 352.6 L266.0 353.1 L266.2 353.5 L266.5 353.9 L266.9 354.2 L267.2 354.5 L267.6 354.7 L268.0 354.8 L268.4 354.9 L268.9 354.9 L269.3 354.9 L269.8 354.8 L270.2 354.7 L270.6 354.6 L271.0 354.4 L271.3 354.2 L271.6 353.9 L271.8 353.6 L272.1 353.2 L272.3 352.8 L272.4 352.4 L272.5 352.0 L272.6 351.6 L272.7 351.2 L272.7 350.8 L272.7 350.5 L272.6 350.1 L272.5 349.9 L272.3 349.6 L272.1 349.4 L271.8 349.2 L271.6 349.1 L271.4 348.9 L271.1 348.8 L270.9 348.6 L270.7 348.5 L270.5 348.7 L270.6 348.9 L270.8 349.1 L271.0 349.3 L271.2 349.5 L271.4 349.7 L271.6 349.9 L271.7 350.0 L271.8 350.2 L271.9 350.4 L271.9 350.5 L271.9 350.8 L271.8 351.1 L271.8 351.4 L271.7 351.7 L271.5 352.1 L271.4 352.4 L271.2 352.8 L271.1 353.0 L270.9 353.3 L270.7 353.4 L270.5 353.5 L270.2 353.6 L269.9 353.7 L269.6 353.8 L269.2 353.8 L268.9 353.8 L268.6 353.8 L268.3 353.8 L268.0 353.7 L267.8 353.5 L267.6 353.4 L267.4 353.1 L267.1 352.8 L266.9 352.5 L266.7 352.1 L266.5 351.7 L266.4 351.3 L266.3 350.8 L266.2 350.4 L266.1 350.0 L266.2 349.6 L266.2 349.1 L266.3 348.6 L266.5 348.0 L266.7 347.5 L266.9 346.9 L267.1 346.3 L267.4 345.8 L267.6 345.3 L267.9 344.8 L268.2 344.3 L268.6 343.9 L269.0 343.4 L269.4 343.0 L269.9 342.5 L270.4 342.1 L270.9 341.6 L271.3 341.2 L271.8 340.7 L272.3 340.3Z" fill="#fff" />
<path d="M354.7 341.3 L355.2 341.8 L355.6 342.4 L356.1 342.9 L356.6 343.5 L357.1 344.1 L357.6 344.6 L358.0 345.1 L358.4 345.7 L358.8 346.2 L359.1 346.7 L359.3 347.3 L359.5 347.8 L359.7 348.3 L359.8 348.9 L359.9 349.4 L360.0 350.0 L360.0 350.5 L360.0 351.0 L359.9 351.4 L359.9 351.9 L359.7 352.3 L359.6 352.8 L359.3 353.2 L359.1 353.7 L358.8 354.1 L358.4 354.5 L358.1 354.9 L357.8 355.1 L357.5 355.4 L357.3 355.5 L357.1 355.5 L356.9 355.5 L356.6 355.5 L356.3 355.4 L356.0 355.2 L355.6 355.0 L355.3 354.8 L355.0 354.6 L354.8 354.4 L354.6 354.2 L354.4 354.0 L354.3 353.8 L354.2 353.5 L354.1 353.2 L354.1 352.9 L354.0 352.6 L354.0 352.3 L354.0 352.1 L354.0 351.8 L354.0 351.6 L354.0 351.4 L354.1 351.3 L354.2 351.1 L354.3 350.9 L354.4 350.8 L354.5 350.6 L354.7 350.5 L354.9 350.3 L355.0 350.1 L355.1 349.9 L354.9 349.7 L354.7 349.8 L354.5 349.9 L354.3 350.1 L354.2 350.2 L354.0 350.3 L353.8 350.5 L353.6 350.7 L353.4 350.9 L353.3 351.1 L353.2 351.4 L353.2 351.7 L353.1 352.0 L353.1 352.4 L353.1 352.7 L353.2 353.1 L353.2 353.5 L353.3 353.8 L353.4 354.2 L353.6 354.5 L353.8 354.8 L354.1 355.1 L354.4 355.4 L354.7 355.6 L355.1 355.9 L355.5 356.2 L355.9 356.4 L356.3 356.5 L356.8 356.6 L357.2 356.6 L357.7 356.5 L358.1 356.3 L358.5 356.0 L358.9 355.6 L359.3 355.2 L359.7 354.8 L360.0 354.3 L360.3 353.7 L360.6 353.2 L360.8 352.7 L360.9 352.1 L361.0 351.6 L361.1 351.0 L361.1 350.4 L361.0 349.9 L360.9 349.3 L360.8 348.7 L360.7 348.1 L360.5 347.5 L360.2 346.9 L359.9 346.3 L359.6 345.7 L359.2 345.1 L358.8 344.6 L358.3 344.0 L357.8 343.4 L357.3 342.9 L356.8 342.4 L356.3 341.8 L355.8 341.3 L355.3 340.7Z" fill="#fff" />
<path d="M310.0 318.3 L308.8 318.8 L307.5 319.2 L306.3 319.7 L305.1 320.1 L303.8 320.6 L302.6 321.1 L301.3 321.5 L300.0 322.0 L298.7 322.5 L297.3 323.0 L295.9 323.5 L294.4 324.0 L293.0 324.5 L291.6 325.0 L290.3 325.5 L289.0 326.0 L287.8 326.5 L286.6 326.9 L285.4 327.3 L284.3 327.8 L283.2 328.2 L282.1 328.6 L281.1 329.1 L280.0 329.5 L278.9 329.9 L277.9 330.3 L276.9 330.7 L275.9 331.1 L274.9 331.5 L273.9 332.0 L272.9 332.5 L272.0 333.0 L271.1 333.6 L270.1 334.2 L269.2 334.8 L268.3 335.5 L267.4 336.2 L266.6 336.9 L265.8 337.7 L265.0 338.5 L264.3 339.3 L263.6 340.2 L262.9 341.1 L262.3 342.1 L261.7 343.1 L261.1 344.0 L260.5 345.0 L260.0 346.0 L259.5 347.0 L259.0 347.9 L258.6 348.9 L258.1 349.8 L257.7 350.8 L257.3 351.8 L256.9 352.9 L256.5 354.0 L256.1 355.1 L255.7 356.3 L255.3 357.4 L254.9 358.6 L254.5 359.9 L254.1 361.2 L253.8 362.5 L253.5 364.0 L253.2 365.7 L252.9 367.8 L252.7 370.1 L252.4 372.4 L252.2 374.5 L252.1 376.2 L252.0 377.5 L252.0 378.0 L252.1 377.7 L252.3 376.8 L252.5 375.3 L252.8 373.5 L253.2 371.5 L253.5 369.5 L253.9 367.6 L254.3 366.0 L254.7 364.6 L255.1 363.2 L255.5 361.9 L256.0 360.5 L256.5 359.2 L257.0 357.9 L257.5 356.7 L258.0 355.5 L258.5 354.3 L259.1 353.2 L259.6 352.1 L260.2 351.0 L260.7 349.9 L261.3 348.9 L262.0 347.9 L262.6 347.0 L263.3 346.1 L263.9 345.3 L264.6 344.5 L265.3 343.7 L266.0 343.0 L266.8 342.3 L267.6 341.6 L268.5 341.0 L269.4 340.4 L270.4 339.9 L271.3 339.5 L272.4 339.1 L273.4 338.7 L274.6 338.3 L275.8 337.9 L277.0 337.5 L278.4 337.1 L279.8 336.7 L281.4 336.3 L283.0 336.0 L284.6 335.6 L286.1 335.2 L287.6 334.9 L289.0 334.5 L290.3 334.1 L291.5 333.8 L292.7 333.5 L293.8 333.1 L294.9 332.8 L296.0 332.4 L297.0 332.0 L298.0 331.5 L299.0 331.0 L299.9 330.4 L300.8 329.9 L301.7 329.2 L302.6 328.6 L303.4 327.9 L304.2 327.2 L305.0 326.5 L305.8 325.7 L306.5 324.9 L307.2 324.0 L307.8 323.1 L308.5 322.2 L309.2 321.3 L309.8 320.4 L310.5 319.5Z" fill="#fff" />
<path d="M313.0 318.3 L314.2 318.8 L315.5 319.2 L316.7 319.7 L317.9 320.1 L319.2 320.6 L320.4 321.1 L321.7 321.5 L323.0 322.0 L324.3 322.5 L325.7 323.0 L327.1 323.5 L328.6 324.0 L330.0 324.5 L331.4 325.0 L332.7 325.5 L334.0 326.0 L335.2 326.5 L336.4 326.9 L337.6 327.3 L338.7 327.8 L339.8 328.2 L340.9 328.6 L341.9 329.1 L343.0 329.5 L344.1 329.9 L345.1 330.3 L346.1 330.7 L347.1 331.1 L348.1 331.5 L349.1 332.0 L350.1 332.5 L351.0 333.0 L351.9 333.6 L352.9 334.2 L353.8 334.8 L354.7 335.5 L355.6 336.2 L356.4 336.9 L357.2 337.7 L358.0 338.5 L358.7 339.3 L359.4 340.2 L360.1 341.1 L360.7 342.1 L361.3 343.1 L361.9 344.0 L362.5 345.0 L363.0 346.0 L363.5 347.0 L364.0 347.9 L364.4 348.9 L364.9 349.8 L365.3 350.8 L365.7 351.8 L366.1 352.9 L366.5 354.0 L366.9 355.1 L367.3 356.3 L367.7 357.4 L368.1 358.6 L368.5 359.9 L368.9 361.2 L369.2 362.5 L369.5 364.0 L369.8 365.7 L370.1 367.8 L370.3 370.1 L370.6 372.4 L370.8 374.5 L370.9 376.2 L371.0 377.5 L371.0 378.0 L370.9 377.7 L370.7 376.8 L370.5 375.3 L370.2 373.5 L369.8 371.5 L369.5 369.5 L369.1 367.6 L368.7 366.0 L368.3 364.6 L367.9 363.2 L367.5 361.9 L367.0 360.5 L366.5 359.2 L366.0 357.9 L365.5 356.7 L365.0 355.5 L364.5 354.3 L363.9 353.2 L363.4 352.1 L362.8 351.0 L362.3 349.9 L361.7 348.9 L361.0 347.9 L360.4 347.0 L359.7 346.1 L359.1 345.3 L358.4 344.5 L357.7 343.7 L357.0 343.0 L356.2 342.3 L355.4 341.6 L354.5 341.0 L353.6 340.4 L352.6 339.9 L351.7 339.5 L350.6 339.1 L349.6 338.7 L348.4 338.3 L347.2 337.9 L346.0 337.5 L344.6 337.1 L343.2 336.7 L341.6 336.3 L340.0 336.0 L338.4 335.6 L336.9 335.2 L335.4 334.9 L334.0 334.5 L332.7 334.1 L331.5 333.8 L330.3 333.5 L329.2 333.1 L328.1 332.8 L327.0 332.4 L326.0 332.0 L325.0 331.5 L324.0 331.0 L323.1 330.4 L322.2 329.9 L321.3 329.2 L320.4 328.6 L319.6 327.9 L318.8 327.2 L318.0 326.5 L317.2 325.7 L316.5 324.9 L315.8 324.0 L315.2 323.1 L314.5 322.2 L313.8 321.3 L313.2 320.4 L312.5 319.5Z" fill="#fff" />
<path d="M252.5 343.9 L253.4 343.6 L254.4 343.3 L255.4 343.0 L256.3 342.7 L257.3 342.4 L258.2 342.1 L259.2 341.8 L260.2 341.4 L261.2 341.1 L262.3 340.6 L263.4 340.2 L264.5 339.7 L265.6 339.2 L266.7 338.7 L267.8 338.1 L269.0 337.6 L270.1 337.0 L271.2 336.4 L272.3 335.9 L273.4 335.3 L274.5 334.7 L275.5 334.2 L276.5 333.6 L277.5 333.0 L278.6 332.4 L279.6 331.8 L280.6 331.2 L281.6 330.7 L282.6 330.1 L283.6 329.5 L283.4 329.1 L282.3 329.6 L281.3 330.0 L280.2 330.5 L279.1 330.9 L278.0 331.3 L276.9 331.8 L275.9 332.2 L274.8 332.7 L273.7 333.2 L272.6 333.7 L271.5 334.2 L270.4 334.8 L269.3 335.4 L268.2 336.0 L267.0 336.6 L265.9 337.2 L264.9 337.7 L263.8 338.3 L262.7 338.8 L261.7 339.4 L260.7 339.8 L259.8 340.3 L258.8 340.7 L257.9 341.2 L257.0 341.6 L256.0 342.0 L255.1 342.4 L254.2 342.8 L253.3 343.2 L252.3 343.7Z" fill="#e9bd1c" />
<path d="M371.6 343.7 L370.6 343.2 L369.6 342.8 L368.5 342.4 L367.5 342.0 L366.4 341.6 L365.4 341.2 L364.3 340.7 L363.3 340.3 L362.3 339.8 L361.3 339.4 L360.3 338.9 L359.3 338.3 L358.4 337.8 L357.4 337.2 L356.4 336.6 L355.4 336.0 L354.5 335.4 L353.5 334.8 L352.4 334.2 L351.4 333.7 L350.4 333.2 L349.3 332.7 L348.3 332.2 L347.2 331.8 L346.2 331.3 L345.1 330.9 L344.1 330.5 L343.0 330.0 L341.9 329.6 L340.9 329.1 L340.7 329.5 L341.7 330.1 L342.7 330.7 L343.7 331.2 L344.7 331.8 L345.6 332.4 L346.6 333.0 L347.6 333.6 L348.6 334.2 L349.6 334.7 L350.6 335.3 L351.6 335.8 L352.5 336.4 L353.5 337.0 L354.5 337.5 L355.5 338.1 L356.5 338.6 L357.6 339.2 L358.6 339.7 L359.7 340.2 L360.7 340.6 L361.8 341.1 L362.9 341.4 L363.9 341.8 L365.0 342.1 L366.1 342.4 L367.2 342.7 L368.3 343.0 L369.4 343.3 L370.5 343.6 L371.6 343.9Z" fill="#e9bd1c" />
</g>
<g fill="#7fdc3e">
<path d="M135.5 277.5 L139.8 273.8 L139 277.6 Z"/>
<path d="M134 279.3 L137.8 282.2 L135.2 279 Z"/>
<path d="M110.2 285.2 L114.5 284.3 L118.2 285.6 L114.4 286.6 Z"/>
<path d="M157.5 325 L160.5 326.2 L160 327 Z"/>
</g>
<path d="M190.6 333.4 C190 336.6 193.2 337.6 194.6 335.4" fill="none" stroke="#fff" stroke-width="0.7" opacity="0.9"/>
<path d="M311.1 314.0 L311.1 314.6 L311.1 315.1 L311.1 315.7 L311.1 316.3 L311.0 316.9 L311.0 317.5 L311.0 318.1 L311.0 318.7 L311.0 319.3 L311.0 320.0 L310.9 320.6 L310.9 321.3 L310.8 322.0 L310.8 322.7 L310.7 323.5 L310.7 324.2 L310.7 324.9 L310.6 325.6 L310.6 326.3 L310.6 327.0 L310.6 327.7 L310.6 328.3 L310.6 328.9 L310.6 329.6 L310.6 330.2 L310.7 330.8 L310.7 331.4 L310.8 332.0 L310.8 332.5 L310.9 333.1 L311.0 333.7 L311.1 334.2 L311.3 334.8 L311.4 335.3 L311.5 335.9 L311.7 336.4 L311.9 336.9 L312.1 337.3 L312.2 337.8 L312.4 338.2 L312.7 338.6 L312.9 339.0 L313.1 339.4 L313.4 339.7 L313.6 340.0 L313.9 340.2 L314.1 340.5 L314.4 340.8 L314.6 341.0 L314.8 341.3 L315.2 341.1 L315.0 340.8 L314.8 340.4 L314.6 340.1 L314.5 339.8 L314.3 339.5 L314.1 339.2 L314.0 338.8 L313.8 338.5 L313.7 338.1 L313.6 337.8 L313.4 337.4 L313.3 336.9 L313.1 336.5 L313.0 336.0 L312.9 335.5 L312.7 335.0 L312.6 334.5 L312.5 333.9 L312.4 333.4 L312.3 332.9 L312.2 332.3 L312.1 331.8 L312.1 331.2 L312.0 330.7 L311.9 330.1 L311.9 329.5 L311.9 328.9 L311.8 328.3 L311.8 327.6 L311.8 327.0 L311.8 326.3 L311.8 325.7 L311.9 325.0 L311.9 324.3 L312.0 323.5 L312.0 322.8 L312.1 322.1 L312.1 321.4 L312.2 320.7 L312.2 320.0 L312.3 319.4 L312.3 318.8 L312.4 318.2 L312.4 317.6 L312.5 317.0 L312.5 316.4 L312.6 315.8 L312.6 315.2 L312.7 314.6 L312.7 314.0Z" fill="#16130f" />
<path d="M286.8 252.2 L294.0 253.0 L302.0 260.2 L304.4 265.8 L298.8 262.6 L290.8 259.4 Z" fill="#7fcdea" opacity="0.6" filter="url(#soft)"/>
<ellipse cx="286" cy="301" rx="5" ry="4.5" fill="#e9dc3a" opacity="0.7" filter="url(#soft)"/>
<ellipse cx="349" cy="297" rx="5" ry="4" fill="#e9dc3a" opacity="0.65" filter="url(#soft)"/>
<ellipse cx="318" cy="262" rx="4" ry="5" fill="#d8d23a" opacity="0.65" filter="url(#soft)"/>
<path d="M292.2 264.1 L299.2 263.4 L305.6 265.4 L301.1 257.7 L307.5 260.9 L310.7 258.3 L316.5 262.8 L319.7 270.5 L323.5 264.1 L328.0 262.8 L331.8 269.2 L331.2 275.0 L336.3 272.4 L345.3 274.3 L349.8 276.9 L346.6 282.0 L351.7 283.9 L356.8 286.5 L355.5 289.7 L349.1 292.2 L354.2 301.2 L347.8 297.4 L340.2 294.8 L331.2 296.1 L322.2 292.2 L315.8 287.1 L308.2 283.3 L304.3 275.6 L296.6 267.9 Z" fill="#f1db1f" stroke="#f1db1f" stroke-width="1" stroke-linejoin="round"/>
<ellipse cx="306.6" cy="278.1" rx="20.0" ry="3.2" fill="#f1db1f" transform="rotate(-135.9 306.6 278.1)"/>
<ellipse cx="311.1" cy="274.9" rx="19.8" ry="1.8" fill="#f1db1f" transform="rotate(-120.1 311.1 274.9)"/>
<ellipse cx="315.9" cy="275.1" rx="17.6" ry="5.0" fill="#f1db1f" transform="rotate(-107.0 315.9 275.1)"/>
<ellipse cx="324.8" cy="277.2" rx="15.2" ry="5.5" fill="#f1db1f" transform="rotate(-75.7 324.8 277.2)"/>
<ellipse cx="335.2" cy="284.1" rx="16.3" ry="5.0" fill="#f1db1f" transform="rotate(-29.0 335.2 284.1)"/>
<ellipse cx="339.0" cy="289.6" rx="18.2" ry="4.5" fill="#f1db1f" transform="rotate(-7.4 339.0 289.6)"/>
<ellipse cx="337.8" cy="297.0" rx="17.5" ry="2.0" fill="#f1db1f" transform="rotate(16.6 337.8 297.0)"/>
<ellipse cx="327" cy="290.5" rx="10" ry="3.6" fill="#c8741c" transform="rotate(22 327 290.5)"/>
<ellipse cx="331" cy="288" rx="9" ry="3" fill="#eccb20" transform="rotate(22 331 288)"/>
<path d="M297.2 305.0 L306.8 300.2 L316.4 293.0 L324.4 295.4 L334.8 297.8 L322.8 300.2 L318.0 302.6 L315.1 309.0 L312.9 317.0 L310.8 317.0 L308.4 309.0 L303.6 306.6 Z" fill="#17130f" />
<path d="M283.8 298.6 L287.7 293.5 L292.8 290.3 L299.2 291.0 L299.2 285.8 L301.8 283.9 L305.6 288.4 L309.4 283.9 L313.3 282.6 L315.8 286.5 L322.2 285.2 L318.4 291.0 L314.6 297.4 L308.2 301.2 L299.2 303.8 L290.2 302.5 L285.1 301.2 Z" fill="#f7e52a" stroke="#f7e52a" stroke-width="1" stroke-linejoin="round"/>
<ellipse cx="295.9" cy="300.9" rx="12.3" ry="2.8" fill="#f7e52a" transform="rotate(-170.2 295.9 300.9)"/>
<ellipse cx="297.8" cy="297.9" rx="11.5" ry="3.2" fill="#f7e52a" transform="rotate(-153.3 297.8 297.9)"/>
<ellipse cx="304.5" cy="293.7" rx="9.9" ry="3.8" fill="#f7e52a" transform="rotate(-110.6 304.5 293.7)"/>
<ellipse cx="310.0" cy="293.0" rx="10.2" ry="3.8" fill="#f7e52a" transform="rotate(-78.7 310.0 293.0)"/>
<ellipse cx="315.2" cy="294.0" rx="11.6" ry="3.2" fill="#f7e52a" transform="rotate(-51.1 315.2 294.0)"/>
<ellipse cx="303.5" cy="300.8" rx="8.5" ry="2.6" fill="#c8741c" transform="rotate(-17 303.5 300.8)"/>
<ellipse cx="302" cy="298.6" rx="8" ry="2.4" fill="#f4df24" transform="rotate(-17 302 298.6)"/>
<g fill="#fff" opacity="0.85">
<text x="366.4" y="287.9" font-size="3.7" font-weight="bold" textLength="15.6" lengthAdjust="spacingAndGlyphs">SPRING</text>
<text x="382.2" y="287.9" font-size="3.7" textLength="7" lengthAdjust="spacingAndGlyphs" opacity="0.75">2008</text>
<rect x="366.2" y="289.2" width="20.6" height="0.9" opacity="0.45"/>
<rect x="358" y="286" width="6.8" height="0.8" opacity="0.25"/>
</g>
<!-- taskbar -->
<rect x="0" y="0" width="625" height="10" fill="url(#tb)"/>
<rect x="3.2" y="1.5" width="0.9" height="7.5" fill="#b9c4d4" opacity="0.8"/><rect x="5" y="1.5" width="0.9" height="7.5" fill="#b9c4d4" opacity="0.8"/>
<g font-size="6.3" fill="#1e1e20" stroke="#1e1e20" stroke-width="0.15">
<text x="8" y="7.8" fill="#8e8e98" stroke="none" textLength="11" lengthAdjust="spacingAndGlyphs">Start</text>
<text x="62.8" y="7.8" textLength="56" lengthAdjust="spacingAndGlyphs">GTAsajtens Forum...</text>
<text x="140.8" y="7.8" textLength="30" lengthAdjust="spacingAndGlyphs">Downloads</text>
<text x="218.9" y="7.8" textLength="16.2" lengthAdjust="spacingAndGlyphs">Dump</text>
<text x="297" y="7.8" textLength="55.8" lengthAdjust="spacingAndGlyphs">Adobe Photoshop ...</text>
<text x="602.1" y="7.8" fill="#55555a" stroke="none" textLength="15.6" lengthAdjust="spacingAndGlyphs">23:33</text>
<text x="511.2" y="7.9" font-weight="bold" font-size="6.6" textLength="7" lengthAdjust="spacingAndGlyphs">BT</text>
</g>
<!-- taskbar icons -->
<g>
<!-- teardrop -->
<path d="M37.6 2 C35 1.8 31.4 3.6 31.2 6 C31.1 7.6 32.4 8.5 33.9 8.4 C36.2 8.2 37.6 5 37.6 2 Z" fill="#3d3d40"/>
<circle cx="33.9" cy="5.9" r="1.5" fill="#dff2fb"/><circle cx="34.1" cy="5.9" r="0.8" fill="#4bb6e8"/>
<!-- firefox -->
<circle cx="56.6" cy="4.9" r="3.6" fill="#e8801c"/>
<circle cx="57.1" cy="4.2" r="2.4" fill="#2f62c4"/><circle cx="57.6" cy="3.4" r="1.1" fill="#6aa6ea"/>
<path d="M53.2 3.2 C53 6 54.4 8.2 56.8 8.5 C58.6 8.6 59.8 7.6 60.2 6 C59 7 57 7 55.8 5.8 C55 5 54.8 3.6 55.4 2.4 Z" fill="#e06a12"/>
<path d="M54.2 1.6 L55.8 2.4 L54.6 3.4 Z" fill="#f0a030"/>
<!-- folders -->
<rect x="131.2" y="2.3" width="6.9" height="5.5" fill="#2b87b8"/><rect x="131.2" y="5.6" width="6.9" height="2.2" fill="#33606f"/><rect x="131.2" y="2.3" width="6.9" height="1.2" fill="#3aa2d6"/>
<rect x="209.6" y="2.3" width="6.6" height="5.5" fill="#2b87b8"/><rect x="209.6" y="5.6" width="6.6" height="2.2" fill="#33606f"/><rect x="209.6" y="2.3" width="6.6" height="1.2" fill="#3aa2d6"/>
<!-- photoshop -->
<g transform="translate(0.9 0)"><rect x="286.2" y="1.6" width="7.2" height="7" rx="1.6" fill="#f2d21c"/>
<circle cx="289.8" cy="4.8" r="2" fill="#c8551a"/><circle cx="289.8" cy="4.8" r="0.9" fill="#5a2c12"/>
<path d="M287 7.2 L292.6 7.2 L292 8.4 L287.6 8.4 Z" fill="#e8a81a"/></g>
<!-- tray -->
<rect x="520.6" y="1.5" width="7" height="7.2" fill="#161616"/><rect x="522" y="2.2" width="4.2" height="2.6" fill="#ececec"/><rect x="522.3" y="6" width="3.6" height="2.4" fill="#bdbdbd"/>
<path d="M529 8.8 L529.4 3 L531 1.4 L532.2 3 L534.2 1.8 L534.4 5 L533 8.8 Z" fill="#bf6a2a"/><rect x="532.2" y="5" width="2.6" height="3.6" fill="#8f8f8f"/><rect x="530.2" y="3.6" width="1.6" height="1.4" fill="#f0e0c0"/>
<rect x="538.2" y="1.9" width="3.6" height="3.4" fill="#1c3a3c"/><rect x="538.9" y="2.4" width="2.2" height="1.8" fill="#39a7c8"/>
<rect x="541.6" y="5" width="3.6" height="3.5" fill="#1c3a3c"/><rect x="542.3" y="5.6" width="2.2" height="1.8" fill="#46b46a"/>
<path d="M547 6.5 L549.6 3.4 L551.2 4.6 L552.8 1.9 L552.6 6 L550.4 8.2 L547.8 8.2 Z" fill="#4aa6e2"/><rect x="548.4" y="5.6" width="2.6" height="1.8" fill="#e6f2fb"/>
<circle cx="558.4" cy="5.1" r="3.1" fill="#505054"/><circle cx="558.4" cy="5.1" r="2" fill="#e4e4e6"/><path d="M557.4 3.8 L559.4 3.8 L558.2 6.6 Z" fill="#505054"/>
<rect x="564.4" y="1.6" width="6.2" height="3.6" fill="#f1cf3a"/><rect x="564.2" y="4.9" width="6.8" height="3.4" fill="#3e86d8"/><rect x="565.4" y="5.6" width="3" height="1.6" fill="#f3a64a"/>
<path d="M573 2.2 L574.4 2 L578.2 5.6 L577.2 6.8 Z" fill="#111"/><rect x="577.4" y="6" width="2.4" height="2.3" fill="#1a2fb0"/>
<rect x="581.8" y="1.8" width="6.4" height="5" fill="#f2b32a"/><rect x="582.6" y="2.6" width="3.6" height="2.6" fill="#f7e06a"/><rect x="586.4" y="1.6" width="2.2" height="7" fill="#3d8fe0"/><rect x="583.4" y="7" width="3.4" height="1.4" fill="#6fb2ea"/>
<path d="M591 8.8 L591.6 5.4 L592.6 4.4 L592.8 1.4 L594.4 1.2 L594.8 4.2 L596 5.4 L596.4 8.8 Z" fill="#16181c"/><rect x="595.4" y="5.6" width="2.6" height="3.2" fill="#2b45b8"/><rect x="590.2" y="6.2" width="1.8" height="2.6" fill="#c8641c"/><rect x="593" y="3.2" width="1.4" height="1.2" fill="#2e9c4a"/>
</g>
<!-- places panel -->
<rect x="107.9" y="394.3" width="61.7" height="105.7" fill="#fcfcfd"/>
<rect x="107.9" y="394.3" width="61.7" height="7.6" fill="url(#hd)"/>
<rect x="107.9" y="421.9" width="61.7" height="19.3" fill="#dcdfe3"/>
<g fill="#a8acb4"><rect x="164.6" y="395.2" width="0.9" height="5.8" opacity="0.8"/><rect x="166.4" y="395.2" width="0.9" height="5.8" opacity="0.8"/></g>
<g font-size="6.3" fill="#2a2a2e">
<text x="128.9" y="400.6" font-weight="bold" font-size="6.1" textLength="19" lengthAdjust="spacingAndGlyphs" fill="#111">Platser</text>
<text x="127" y="409.7" textLength="25" lengthAdjust="spacingAndGlyphs">System (C)</text>
<text x="127" y="428.9" textLength="13.4" lengthAdjust="spacingAndGlyphs">Musik</text>
<text x="127" y="448.7" textLength="12.9" lengthAdjust="spacingAndGlyphs">Bilder</text>
<text x="127" y="468.5" textLength="25.7" lengthAdjust="spacingAndGlyphs">Downloads</text>
<text x="127" y="487.5" textLength="13.4" lengthAdjust="spacingAndGlyphs">Dump</text>
</g>
<!-- panel icons -->
<g>
<path d="M110 407 L115 406.6 L124.7 412.2 L124.2 416.5 L117.4 417.9 L110.4 410.5 Z" fill="#15130f"/>
<path d="M110 408.4 L117.3 415.5 L124.3 414.3 L124.1 415.8 L117 417 L110.2 409.7 Z" fill="#2faee2"/>
<rect x="110" y="426.3" width="14" height="10.9" fill="#cfd6dc"/><rect x="110.8" y="427" width="12.4" height="9.3" fill="#15130f"/>
<path d="M110.8 430.2 C116 429.4 121 429.6 122.4 436.3 L119.6 436.3 C119 432.6 116 432.4 110.8 432.8 Z" fill="#2fb2e4"/>
<path d="M110.8 433.6 C115 433.2 118 433.4 118.6 436.3 L110.8 436.3 Z" fill="#2fb2e4"/>
<rect x="109.8" y="445.9" width="15" height="10.6" fill="#d8e0e6"/><rect x="110.8" y="446.8" width="12.8" height="8.4" fill="#15130f"/>
<path d="M119.6 454 L118.2 449.6 L119.8 451.4 L121.6 448.4 L120.8 452.2 L120.4 454.2 L116.4 454 Z" fill="#2f9fd8"/>
<rect x="109.8" y="465.4" width="14.7" height="10.2" fill="#d8e0e6"/><rect x="110.9" y="466.2" width="12.7" height="8.6" fill="#15130f"/>
<path d="M113.8 473.8 L115 469.4 L117.2 472 L116.8 473.6 Z M119 473.8 L120.6 471.2 L122.6 473.8 Z" fill="#2f9fd8"/>
<rect x="110" y="485.3" width="14.5" height="9.7" fill="#d8e0e6"/><rect x="110.9" y="486.2" width="12.9" height="7.9" fill="url(#dump)"/>
</g>
<!-- bottom bars -->
<g>
<rect x="175.8" y="492.9" width="61.8" height="7.1" fill="url(#hd)"/>
<rect x="244.3" y="492.9" width="61.2" height="7.1" fill="url(#hd)"/>
<rect x="312.6" y="492.9" width="61.6" height="7.1" fill="url(#hd)"/>
<rect x="380.2" y="492.9" width="61.8" height="7.1" fill="url(#hd)"/>
<rect x="449.2" y="492.9" width="61.7" height="7.1" fill="url(#hd)"/>
</g>
<g fill="#a8acb4" opacity="0.8">
<rect x="232.8" y="493.8" width="0.9" height="6.2"/><rect x="234.5" y="493.8" width="0.9" height="6.2"/>
<rect x="300.8" y="493.8" width="0.9" height="6.2"/><rect x="302.5" y="493.8" width="0.9" height="6.2"/>
<rect x="369.4" y="493.8" width="0.9" height="6.2"/><rect x="371.1" y="493.8" width="0.9" height="6.2"/>
<rect x="437.2" y="493.8" width="0.9" height="6.2"/><rect x="438.9" y="493.8" width="0.9" height="6.2"/>
<rect x="506" y="493.8" width="0.9" height="6.2"/><rect x="507.7" y="493.8" width="0.9" height="6.2"/>
</g>
<g font-size="6.0" font-weight="bold" fill="#111">
<text x="196.6" y="498.5" textLength="21" lengthAdjust="spacingAndGlyphs">Internet</text>
<text x="266.9" y="498.5" textLength="16.8" lengthAdjust="spacingAndGlyphs">Media</text>
<text x="338.6" y="498.5" textLength="10.5" lengthAdjust="spacingAndGlyphs">Bild</text>
<text x="403.7" y="498.5" textLength="17.2" lengthAdjust="spacingAndGlyphs">Office</text>
<text x="474.2" y="498.5" textLength="12.4" lengthAdjust="spacingAndGlyphs">Spel</text>
</g>
</svg>
</body></html>
